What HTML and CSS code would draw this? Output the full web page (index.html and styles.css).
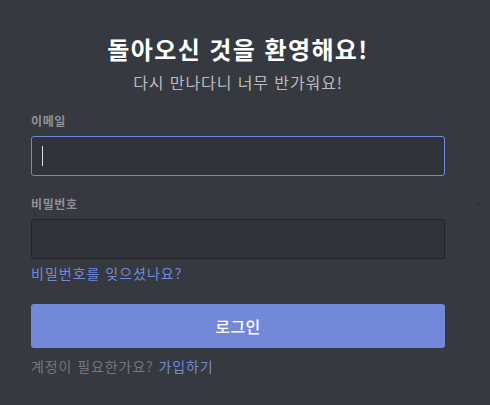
FILE: index.html
```html
<!DOCTYPE html>
<html lang="ko">
<head>
<meta charset="utf-8">
<link rel="stylesheet" href="styles.css">
</head>
<body>
<main class="auth">
  <h1 class="title">돌아오신 것을 환영해요!</h1>
  <p class="subtitle">다시 만나다니 너무 반가워요!</p>
  <form class="form">
    <div class="field">
      <label class="label">이메일</label>
      <div class="input focused"><span class="caret"></span></div>
    </div>
    <div class="field">
      <label class="label">비밀번호</label>
      <div class="input"></div>
    </div>
    <a class="link forgot">비밀번호를 잊으셨나요?</a>
    <button type="button" class="btn">로그인</button>
    <p class="register">계정이 필요한가요? <a class="link">가입하기</a></p>
  </form>
</main>
<span class="dot"></span>
</body>
</html>
```

FILE: styles.css
```css
html, body {
  margin: 0;
  padding: 0;
  background: #36393f;
  height: 100%;
}
body {
  font-family: "Noto Sans CJK KR", "Noto Sans", sans-serif;
  color: #dcddde;
  position: relative;
}
.auth {
  width: 414px;
  margin-left: 31px;
  padding-top: 34px;
  display: flex;
  flex-direction: column;
}
.title {
  margin: 0;
  font-size: 24px;
  line-height: 30px;
  font-weight: 700;
  color: #ffffff;
  text-align: center;
  letter-spacing: 1.4px;
}
.subtitle {
  margin: 8px 0 0;
  font-size: 16px;
  line-height: 20px;
  color: #b9bbbe;
  text-align: center;
  letter-spacing: 0.9px;
}
.form {
  margin-top: 21px;
  display: flex;
  flex-direction: column;
}
.field {
  display: flex;
  flex-direction: column;
  margin-bottom: 20px;
}
.label {
  font-size: 12px;
  line-height: 16px;
  font-weight: 700;
  color: #8e9297;
  margin-bottom: 7px;
  letter-spacing: 0.6px;
}
.input {
  box-sizing: border-box;
  height: 40px;
  background: #303339;
  border: 1px solid #222428;
  border-radius: 3px;
  display: flex;
  align-items: center;
}
.input.focused {
  border-color: #7289da;
}
.caret {
  width: 1px;
  height: 20px;
  margin-left: 10px;
  background: #dcddde;
}
.field:nth-child(2) {
  margin-bottom: 4px;
}
.link {
  color: #7289da;
  text-decoration: none;
}
.forgot {
  font-size: 14px;
  line-height: 20px;
  align-self: flex-start;
  letter-spacing: 1px;
}
.btn {
  margin-top: 21px;
  height: 44px;
  border: 0;
  border-radius: 3px;
  background: #7289da;
  color: #ffffff;
  font-family: inherit;
  font-size: 16px;
  font-weight: 500;
  padding: 0;
  letter-spacing: 0.5px;
}
.register {
  margin: 8px 0 0;
  font-size: 14px;
  line-height: 20px;
  color: #72767d;
  letter-spacing: 0.9px;
}
.dot {
  position: absolute;
  left: 477px;
  top: 203px;
  width: 2px;
  height: 2px;
  background: #2c2e33;
}
```
